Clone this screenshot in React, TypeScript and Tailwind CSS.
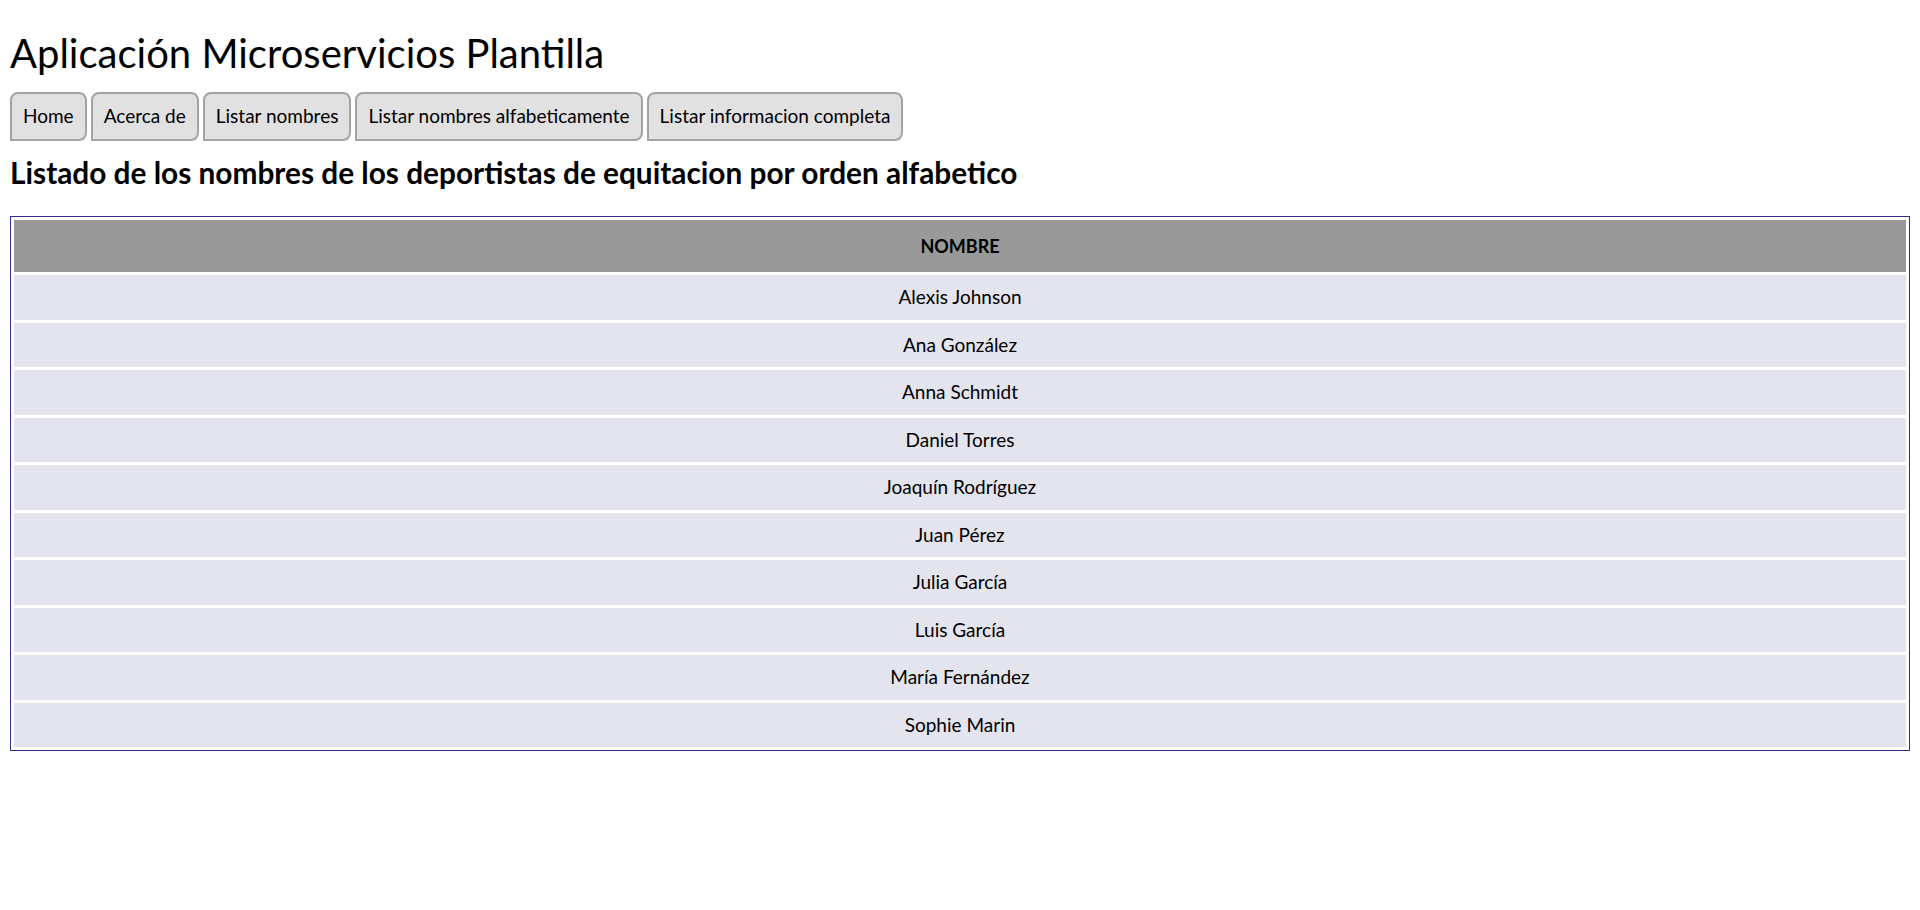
const menu = [
  "Home",
  "Acerca de",
  "Listar nombres",
  "Listar nombres alfabeticamente",
  "Listar informacion completa",
];

const nombres = [
  "Alexis Johnson",
  "Ana González",
  "Anna Schmidt",
  "Daniel Torres",
  "Joaquín Rodríguez",
  "Juan Pérez",
  "Julia García",
  "Luis García",
  "María Fernández",
  "Sophie Marin",
];

export default function App() {
  return (
    <div className="min-h-[910px] bg-white px-[10px] pt-[29px] text-black font-['Lato',sans-serif]">
      <h1 className="text-[40px] leading-[48px] font-normal">
        Aplicación Microservicios Plantilla
      </h1>

      <nav className="mt-[15px] flex gap-[4px]">
        {menu.map((item) => (
          <button
            key={item}
            className="h-[49px] px-[11px] bg-[#e1e1e1] border-2 border-[#a3a3a3] rounded-[8px] rounded-bl-none text-[19px] text-black"
          >
            {item}
          </button>
        ))}
      </nav>

      <h2 className="mt-[14px] text-[29.8px] leading-[36px] font-bold">
        Listado de los nombres de los deportistas de equitacion por orden alfabetico
      </h2>

      <table className="mt-[25px] w-full border border-[#2e2e8a] border-separate border-spacing-[3px] text-[19px]">
        <thead>
          <tr>
            <th className="h-[52px] bg-[#999999] text-[18px] font-bold text-center">NOMBRE</th>
          </tr>
        </thead>
        <tbody>
          {nombres.map((n) => (
            <tr key={n}>
              <td className="h-[44.5px] bg-[#e4e4ee] text-center">{n}</td>
            </tr>
          ))}
        </tbody>
      </table>
    </div>
  );
}
